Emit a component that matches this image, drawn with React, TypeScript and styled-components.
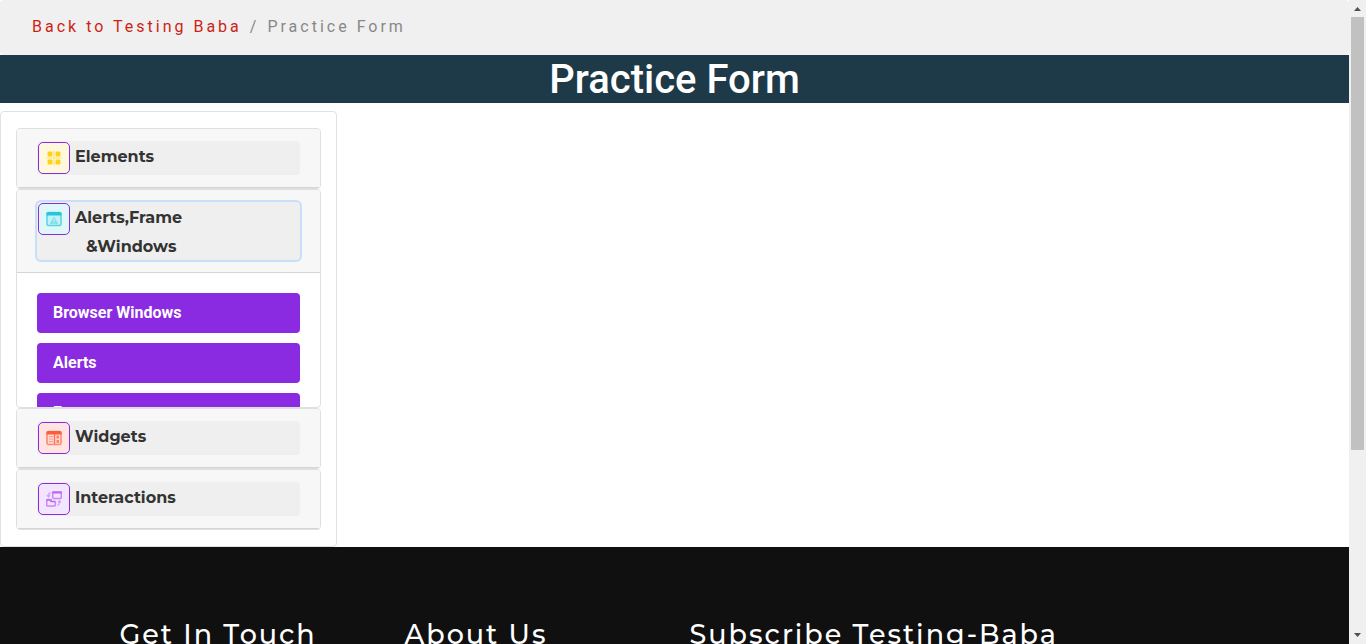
import React, { useState } from 'react';
import styled, { createGlobalStyle } from 'styled-components';

const GlobalStyle = createGlobalStyle`
  *, *::before, *::after { box-sizing: border-box; }
  body {
    margin: 0;
    background: #fff;
    color: #212529;
    font-family: Roboto, "Liberation Sans", sans-serif;
    font-size: 16px;
    line-height: 24px;
  }
`;

const headingFont = 'Montserrat, Inter, "Open Sans", sans-serif';

const Shell = styled.div`
  display: grid;
  grid-template-columns: minmax(0, 1fr) 17px;
  height: 100vh;
  overflow: hidden;
`;

const Page = styled.div`
  min-width: 0;
  overflow: hidden;
`;

const ScrollTrack = styled.div`
  display: flex;
  flex-direction: column;
  align-items: center;
  background: #f0f0f0;
`;

const ScrollArrow = styled.svg`
  display: block;
  flex: none;
  width: 17px;
  height: 17px;
  fill: #505050;
`;

const ScrollSpace = styled.div`
  flex: 1;
  width: 13px;
`;

const ScrollThumb = styled.div`
  height: 71%;
  background: #c1c1c1;
`;

const Breadcrumb = styled.nav`
  padding: 15px 32px 16px;
  border-radius: 4px;
  background: #f0f0f0;
  color: #888;
  letter-spacing: 3px;
`;

const Crumbs = styled.ol`
  display: flex;
  gap: 8px;
  margin: 0;
  padding: 0;
  list-style: none;
`;

const CrumbLink = styled.a`
  color: #cd1f14;
  text-decoration: none;
`;

const Title = styled.h1`
  margin: 0 0 8px;
  padding-top: 2px;
  background: #1e3948;
  color: #fff;
  font-size: 40px;
  font-weight: 500;
  line-height: 46px;
  text-align: center;
`;

const Sidebar = styled.aside`
  width: 25%;
  padding: 16px 15px;
  border: 1px solid #dee2e6;
  border-radius: 4px;
`;

const Panel = styled.section`
  overflow: hidden;
  border: 1px solid #dfdfdf;
  border-radius: 4px;
`;

const PanelHeader = styled.h2`
  margin: 0;
  padding: 12px 20px;
  border-bottom: 1px solid #d5d5d5;
  background: #f7f7f7;
  font-size: 16px;
`;

const PanelToggle = styled.button<{ $active: boolean }>`
  display: flex;
  align-items: flex-start;
  gap: 5px;
  width: 100%;
  min-height: 34px;
  padding: 1px 1px 0;
  border: 0;
  border-radius: 4px;
  outline: 0;
  background: #efefef;
  box-shadow: ${({ $active }) => ($active ? '0 0 0 2px #c8dffa' : 'none')};
  color: #333;
  font-family: ${headingFont};
  font-size: 16px;
  font-weight: 700;
  line-height: 29px;
  text-align: left;
  cursor: pointer;
`;

const IconBox = styled.span<{ $tint: string }>`
  display: flex;
  flex: none;
  align-items: center;
  justify-content: center;
  width: 32px;
  height: 32px;
  border: 1px solid #8a2be2;
  border-radius: 5px;
  background: ${({ $tint }) => $tint};
`;

const Label = styled.span`
  margin-bottom: -1px;
`;

const LabelLine = styled.span<{ $indent?: boolean }>`
  display: block;
  padding-left: ${({ $indent }) => ($indent ? '11px' : '0')};
`;

const PanelBody = styled.div`
  height: 134px;
  padding: 20px;
  overflow: hidden;
`;

const LinkList = styled.ul`
  display: grid;
  gap: 10px;
  margin: 0;
  padding: 0;
  list-style: none;
`;

const TopicLink = styled.a`
  display: block;
  padding: 8px 16px;
  border-radius: 4px;
  background: #8a2be2;
  color: #fff;
  font-weight: 700;
  text-decoration: none;
`;

const Footer = styled.footer`
  padding: 68px 0 80px;
  background: #101010;
  color: #fff;
`;

const FooterGrid = styled.div`
  display: grid;
  grid-template-columns: 1fr 1fr 2fr;
  max-width: 1140px;
  margin: 0 auto;
`;

const FooterHeading = styled.h2`
  margin: 0;
  padding: 0 15px;
  font-family: ${headingFont};
  font-size: 27px;
  font-weight: 500;
  line-height: 40px;
  letter-spacing: 2px;
  white-space: nowrap;
`;

const ElementsIcon = () => (
  <svg width="16" height="16" viewBox="0 0 16 16" aria-hidden="true">
    <path d="M8 .5v15M.5 8h15" stroke="#ffe98f" strokeWidth="1.6" />
    <g fill="#ffd21a">
      <rect x="1.6" y="1.6" width="4.8" height="4.8" rx="1" />
      <rect x="9.6" y="1.6" width="4.8" height="4.8" rx="1" />
      <rect x="1.6" y="9.6" width="4.8" height="4.8" rx="1" />
      <rect x="9.6" y="9.6" width="4.8" height="4.8" rx="1" />
    </g>
  </svg>
);

const AlertsIcon = () => (
  <svg width="16" height="16" viewBox="0 0 16 16" aria-hidden="true">
    <rect x="1" y="1.5" width="14" height="13" rx="1.5" fill="#c2f2f8" stroke="#55d5e3" strokeWidth="1.5" />
    <path d="M.5 4.5v-2Q.5 1 2 1h12q1.5 0 1.5 1.5v2z" fill="#26c6da" />
    <path d="M8 5.5l4.300 7.500H3.700z" fill="#80dfea" />
    <path d="M8 8v2.500M8 11.300v1" stroke="#d5f6fa" strokeWidth="1" />
  </svg>
);

const WidgetsIcon = () => (
  <svg width="16" height="16" viewBox="0 0 16 16" aria-hidden="true">
    <rect x="1" y="1.5" width="14" height="13" rx="1.5" fill="#ffd9d2" stroke="#ff8a72" strokeWidth="1.6" />
    <path d="M.5 4.5v-2Q.5 1 2 1h12q1.5 0 1.5 1.5v2z" fill="#ff5a3c" />
    <path d="M8.5 4v10" stroke="#ff6d52" strokeWidth="1.3" />
    <path d="M3 6.500h4M3 9h4M3 11.500h4" stroke="#ff9a85" strokeWidth="1.2" />
    <path d="M10.500 5.500H13v3h-2.500zM10.500 10H13v3h-2.500z" fill="#ff836b" />
  </svg>
);

const InteractionsIcon = () => (
  <svg width="16" height="16" viewBox="0 0 16 16" fill="none" aria-hidden="true">
    <rect x="6.7" y="1" width="8.600" height="6.500" rx="1" stroke="#c987f9" strokeWidth="1.6" />
    <path d="M6 1.500h10" stroke="#bd68f7" strokeWidth="2" />
    <path d="M4.500 8.500H1.700q-1 0-1 1v4.500q0 1 1 1h6.600q1 0 1-1v-3.500" stroke="#c987f9" strokeWidth="1.6" />
    <path d="M.5 9h4.500v1.500h4.500" stroke="#bd68f7" strokeWidth="1.6" />
    <path d="M4.500 1.500Q2.500 2 2.500 5.500M1 4l1.500 2L4 4M11.500 14.500q2-.5 2-4M12 11.500l1.500-2 1.500 2" stroke="#d5a3fa" strokeWidth="1.3" />
  </svg>
);

const panels = [
  { id: 'elements', lines: ['Elements'], tint: '#fff8dc', Icon: ElementsIcon, links: ['Text Box', 'Check Box'] },
  {
    id: 'alerts',
    lines: ['Alerts,Frame', '&Windows'],
    tint: '#e0f7fa',
    Icon: AlertsIcon,
    links: ['Browser Windows', 'Alerts', 'Frames'],
  },
  { id: 'widgets', lines: ['Widgets'], tint: '#ffe4e1', Icon: WidgetsIcon, links: ['Accordian', 'Date Picker'] },
  { id: 'interactions', lines: ['Interactions'], tint: '#f3e5fd', Icon: InteractionsIcon, links: ['Sortable', 'Selectable'] },
];

export default function App() {
  const [open, setOpen] = useState('alerts');

  return (
    <>
      <GlobalStyle />
      <Shell>
        <Page>
          <Breadcrumb aria-label="Breadcrumb">
            <Crumbs>
              <li><CrumbLink href="#home">Back to Testing Baba</CrumbLink></li>
              <li aria-hidden="true">/</li>
              <li aria-current="page">Practice Form</li>
            </Crumbs>
          </Breadcrumb>
          <Title>Practice Form</Title>
          <Sidebar>
            {panels.map(({ id, lines, tint, Icon, links }) => (
              <Panel key={id}>
                <PanelHeader>
                  <PanelToggle
                    type="button"
                    $active={open === id}
                    aria-expanded={open === id}
                    onClick={() => setOpen(open === id ? '' : id)}
                  >
                    <IconBox $tint={tint}><Icon /></IconBox>
                    <Label>
                      {lines.map((line, i) => (
                        <LabelLine key={line} $indent={i > 0}>{line}</LabelLine>
                      ))}
                    </Label>
                  </PanelToggle>
                </PanelHeader>
                {open === id && (
                  <PanelBody>
                    <LinkList>
                      {links.map((link) => (
                        <li key={link}><TopicLink href={`#${id}`}>{link}</TopicLink></li>
                      ))}
                    </LinkList>
                  </PanelBody>
                )}
              </Panel>
            ))}
          </Sidebar>
          <Footer>
            <FooterGrid>
              <FooterHeading>Get In Touch</FooterHeading>
              <FooterHeading>About Us</FooterHeading>
              <FooterHeading>Subscribe Testing-Baba</FooterHeading>
            </FooterGrid>
          </Footer>
        </Page>
        <ScrollTrack aria-hidden="true">
          <ScrollArrow viewBox="0 0 17 17"><path d="M5 11h7L8.500 7z" /></ScrollArrow>
          <ScrollSpace><ScrollThumb /></ScrollSpace>
          <ScrollArrow viewBox="0 0 17 17"><path d="M5 6h7l-3.500 4z" /></ScrollArrow>
        </ScrollTrack>
      </Shell>
    </>
  );
}
